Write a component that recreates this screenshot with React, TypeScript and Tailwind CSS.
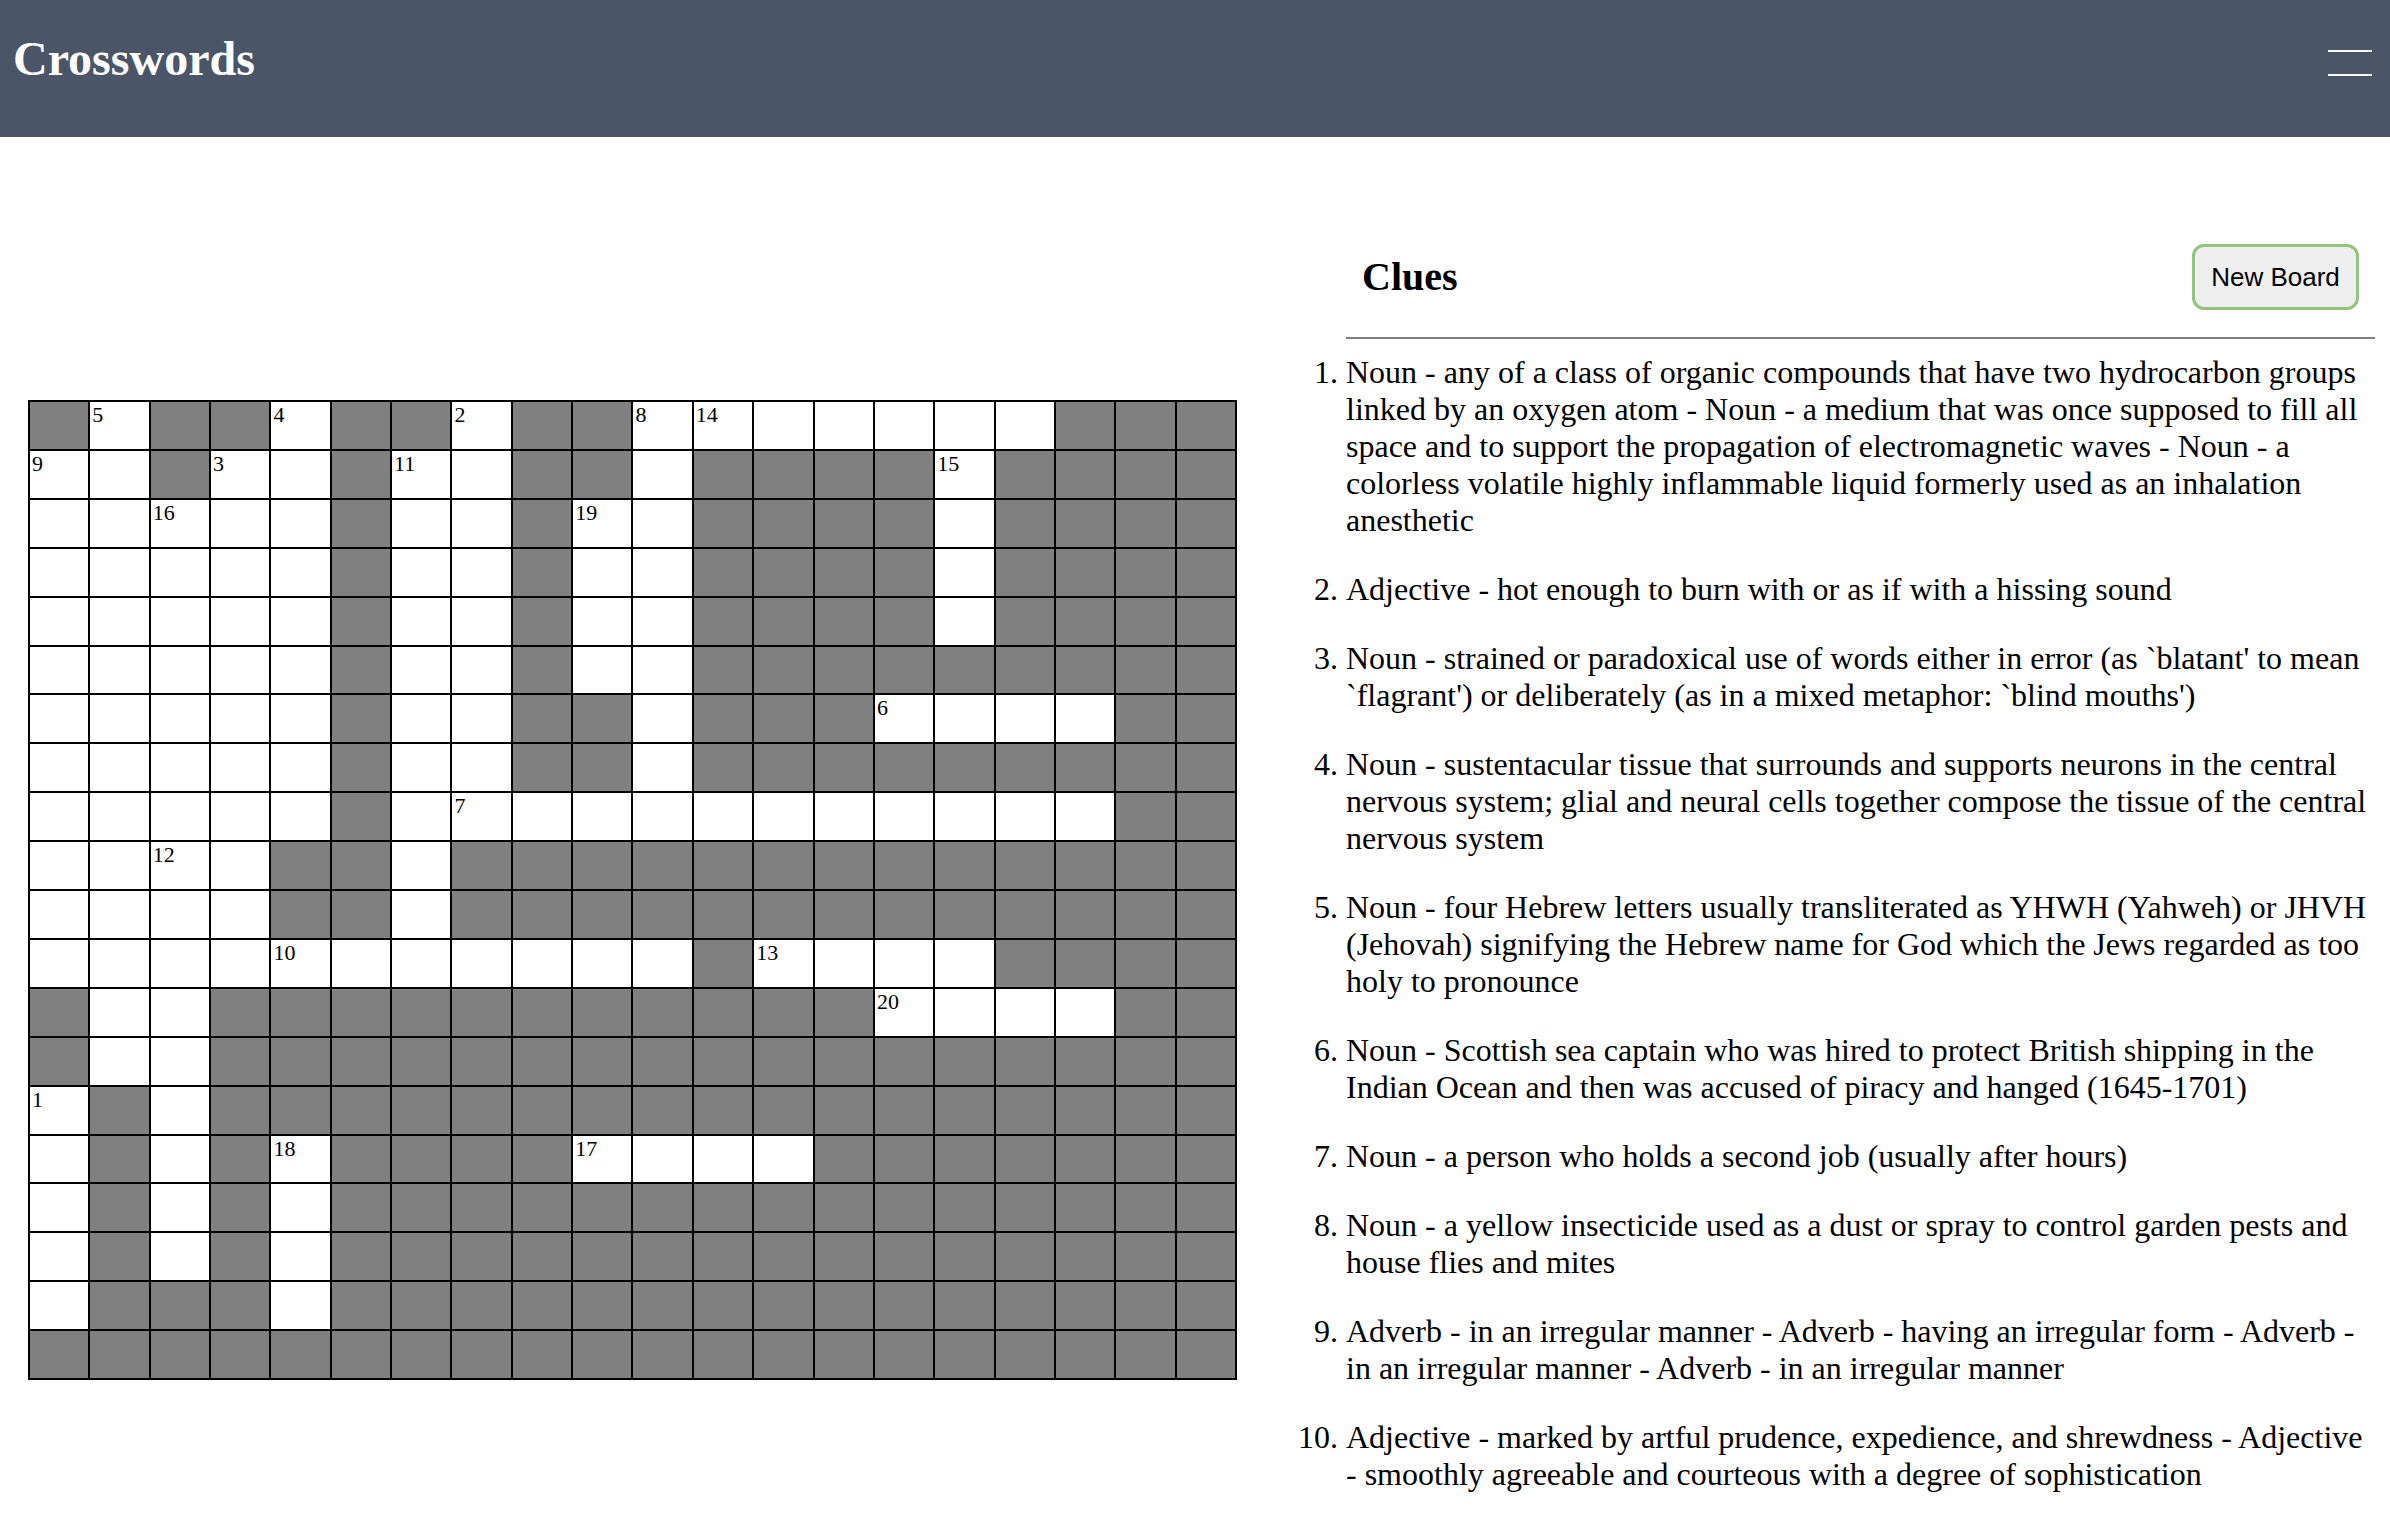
import React from 'react';

// '#' = blocked square, '.' = open square
const BOARD: string[] = [
  '#.##.##.##.......###',
  '..#..#..##.####.####',
  '.....#..#..####.####',
  '.....#..#..####.####',
  '.....#..#..####.####',
  '.....#..#..#########',
  '.....#..##.###....##',
  '.....#..##.#########',
  '.....#............##',
  '....##.#############',
  '....##.#############',
  '...........#....####',
  '#..###########....##',
  '#..#################',
  '.#.#################',
  '.#.#.####....#######',
  '.#.#.###############',
  '.#.#.###############',
  '.###.###############',
  '####################',
];

const NUMBERS: Record<string, number> = {
  '0,1': 5,
  '0,4': 4,
  '0,7': 2,
  '0,10': 8,
  '0,11': 14,
  '1,0': 9,
  '1,3': 3,
  '1,6': 11,
  '1,15': 15,
  '2,2': 16,
  '2,9': 19,
  '6,14': 6,
  '8,7': 7,
  '9,2': 12,
  '11,4': 10,
  '11,12': 13,
  '12,14': 20,
  '14,0': 1,
  '15,4': 18,
  '15,9': 17,
};

const CLUES: string[] = [
  'Noun - any of a class of organic compounds that have two hydrocarbon groups linked by an oxygen atom - Noun - a medium that was once supposed to fill all space and to support the propagation of electromagnetic waves - Noun - a colorless volatile highly inflammable liquid formerly used as an inhalation anesthetic',
  'Adjective - hot enough to burn with or as if with a hissing sound',
  "Noun - strained or paradoxical use of words either in error (as `blatant' to mean `flagrant') or deliberately (as in a mixed metaphor: `blind mouths')",
  'Noun - sustentacular tissue that surrounds and supports neurons in the central nervous system; glial and neural cells together compose the tissue of the central nervous system',
  'Noun - four Hebrew letters usually transliterated as YHWH (Yahweh) or JHVH (Jehovah) signifying the Hebrew name for God which the Jews regarded as too holy to pronounce',
  'Noun - Scottish sea captain who was hired to protect British shipping in the Indian Ocean and then was accused of piracy and hanged (1645-1701)',
  'Noun - a person who holds a second job (usually after hours)',
  'Noun - a yellow insecticide used as a dust or spray to control garden pests and house flies and mites',
  'Adverb - in an irregular manner - Adverb - having an irregular form - Adverb - in an irregular manner - Adverb - in an irregular manner',
  'Adjective - marked by artful prudence, expedience, and shrewdness - Adjective - smoothly agreeable and courteous with a degree of sophistication',
  'Verb - move smoothly and effortlessly - Verb - fly in or as if in a glider plane',
  'Noun - a small fragment of something broken off from the whole',
  'Adjective - not fully grown or developed',
  'Noun - the act of giving a signal with the hands or head',
  'Noun - a short high-pitched cry of a dog or other animal',
  'Noun - a game in which players try to guess a word from clues',
  'Noun - a flat-bottomed boat used for transporting goods',
  'Noun - a thin layer of ice that forms on a surface',
  'Adjective - lacking in energy or enthusiasm',
  'Noun - a loud resonant sound such as that of a bell',
];

function Board() {
  return (
    <div className="grid w-[1209px] h-[980px] grid-cols-[repeat(20,minmax(0,1fr))] grid-rows-[repeat(20,minmax(0,1fr))] border-l-2 border-t-2 border-black">
      {BOARD.map((row, r) =>
        row.split('').map((ch, c) => {
          const num = NUMBERS[`${r},${c}`];
          return (
            <div
              key={`${r}-${c}`}
              className={`border-r-2 border-b-2 border-black pl-[2px] text-[22px] leading-[25px] text-black ${
                ch === '#' ? 'bg-[#808080]' : 'bg-white'
              }`}
            >
              {num ?? ''}
            </div>
          );
        })
      )}
    </div>
  );
}

export default function App() {
  return (
    <div className="min-h-screen bg-white font-['Liberation_Serif','Times_New_Roman',serif] text-black">
      {/* Top bar */}
      <header className="flex h-[137px] items-start justify-between bg-[#4a5568] pl-[13px] pr-[18px]">
        <h1 className="pt-[35px] text-[48px] font-bold leading-[48px] text-white">Crosswords</h1>
        <div className="flex flex-col gap-[22px] pt-[50px]">
          <span className="block h-[2px] w-[44px] bg-white"></span>
          <span className="block h-[2px] w-[44px] bg-white"></span>
        </div>
      </header>

      <main className="flex items-start">
        <div className="pl-[28px] pt-[263px]">
          <Board />
        </div>

        <section className="ml-[109px] w-[1029px] pt-[107px]">
          <div className="flex h-[66px] items-center justify-between px-4">
            <h2 className="text-[40px] font-bold">Clues</h2>
            <button className="flex h-[66px] w-[167px] items-center justify-center rounded-[12px] border-[3px] border-[#93c47f] bg-[#efefef] font-['Liberation_Sans',Arial,sans-serif] text-[26px] text-black">
              New Board
            </button>
          </div>
          <hr className="mt-[27px] border-0 border-t-2 border-[#808080]" />
          <ol className="mt-[15px] list-decimal pl-0 text-[32px] leading-[37px] [list-style-position:outside]">
            {CLUES.map((clue, i) => (
              <li key={i} className="mb-[32px]">
                {clue}
              </li>
            ))}
          </ol>
        </section>
      </main>
    </div>
  );
}
